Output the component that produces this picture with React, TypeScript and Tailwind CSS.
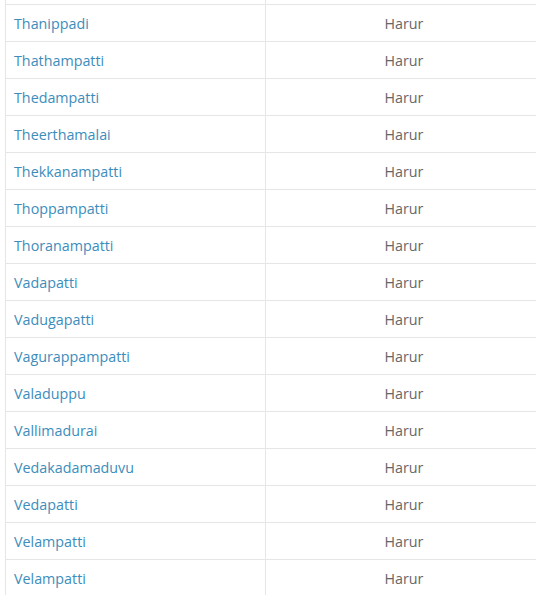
const rows = [
  'Thanippadi',
  'Thathampatti',
  'Thedampatti',
  'Theerthamalai',
  'Thekkanampatti',
  'Thoppampatti',
  'Thoranampatti',
  'Vadapatti',
  'Vadugapatti',
  'Vagurappampatti',
  'Valaduppu',
  'Vallimadurai',
  'Vedakadamaduvu',
  'Vedapatti',
  'Velampatti',
  'Velampatti',
];

export default function App() {
  return (
    <div className="w-[536px] h-[595px] overflow-hidden bg-white font-['Open_Sans',sans-serif] text-[14.3px] leading-[20px]">
      <table className="ml-[5px] w-[537px] border-collapse table-fixed">
        <colgroup>
          <col className="w-[260px]" />
          <col />
        </colgroup>
        <tbody>
          <tr>
            <td className="h-[4px] p-0 border-l border-r border-[#e6e6e6]" />
            <td className="h-[4px] p-0" />
          </tr>
          {rows.map((name, i) => (
            <tr key={i}>
              <td className="px-2 pt-[9px] pb-[7px] border-l border-r border-t border-[#e6e6e6]">
                <a href="#" className="text-[#3c8dbc] no-underline">
                  {name}
                </a>
              </td>
              <td className="px-2 pt-[9px] pb-[7px] border-t border-[#e6e6e6] text-center text-[#666]">
                Harur
              </td>
            </tr>
          ))}
        </tbody>
      </table>
    </div>
  );
}
